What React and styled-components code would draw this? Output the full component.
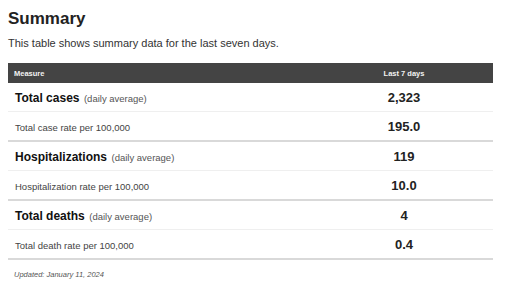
import React from "react";
import styled, { createGlobalStyle } from "styled-components";

const Global = createGlobalStyle`
  html, body { margin: 0; padding: 0; background: #fff; }
  body { font-family: "Liberation Sans", Arial, sans-serif; color: #222; }
`;

const Page = styled.div`
  padding: 9px 19px 0 8px;
`;

const Title = styled.h2`
  margin: 0;
  font-size: 17px;
  line-height: 20px;
  font-weight: 700;
  color: #222;
`;

const Subtitle = styled.p`
  margin: 7px 0 0;
  font-size: 11px;
  line-height: 14px;
  color: #333;
`;

const Table = styled.table`
  margin-top: 13px;
  width: 485px;
  border-collapse: collapse;
  table-layout: fixed;
`;

const HeadCell = styled.th`
  box-sizing: border-box;
  background: #444;
  color: #f2f2f2;
  font-size: 7.5px;
  font-weight: 700;
  height: 20px;
  padding: 0 0 0 ${(p) => (p.$center ? "0" : "6px")};
  text-align: ${(p) => (p.$center ? "center" : "left")};
  width: ${(p) => p.$w};
`;

const Row = styled.tr`
  border-bottom: ${(p) => (p.$rate ? "2px solid #d9d9d9" : "1px solid #efefef")};
`;

const LabelCell = styled.td`
  height: 28px;
  padding: 0 0 0 7px;
  vertical-align: middle;
`;

const ValueCell = styled.td`
  height: 28px;
  padding: 0;
  text-align: center;
  vertical-align: middle;
  font-size: 13px;
  font-weight: 700;
  color: #222;
`;

const Main = styled.span`
  font-size: 12px;
  font-weight: 700;
  color: #111;
`;

const Note = styled.span`
  font-size: 9.5px;
  color: #555;
`;

const Rate = styled.span`
  font-size: 9.5px;
  color: #444;
`;

const Footnote = styled.p`
  margin: 10px 0 0 6px;
  font-size: 7.5px;
  font-style: italic;
  color: #555;
`;

const rows = [
  { main: "Total cases", value: "2,323", rate: "Total case rate per 100,000", rateValue: "195.0" },
  { main: "Hospitalizations", value: "119", rate: "Hospitalization rate per 100,000", rateValue: "10.0" },
  { main: "Total deaths", value: "4", rate: "Total death rate per 100,000", rateValue: "0.4" },
];

export default function App() {
  return (
    <Page>
      <Global />
      <Title>Summary</Title>
      <Subtitle>This table shows summary data for the last seven days.</Subtitle>
      <Table>
        <thead>
          <tr>
            <HeadCell $w="307px">Measure</HeadCell>
            <HeadCell $w="178px" $center>
              Last 7 days
            </HeadCell>
          </tr>
        </thead>
        <tbody>
          {rows.map((r) => (
            <React.Fragment key={r.main}>
              <Row>
                <LabelCell>
                  <Main>{r.main}</Main> <Note>(daily average)</Note>
                </LabelCell>
                <ValueCell>{r.value}</ValueCell>
              </Row>
              <Row $rate>
                <LabelCell>
                  <Rate>{r.rate}</Rate>
                </LabelCell>
                <ValueCell>{r.rateValue}</ValueCell>
              </Row>
            </React.Fragment>
          ))}
        </tbody>
      </Table>
      <Footnote>Updated: January 11, 2024</Footnote>
    </Page>
  );
}
